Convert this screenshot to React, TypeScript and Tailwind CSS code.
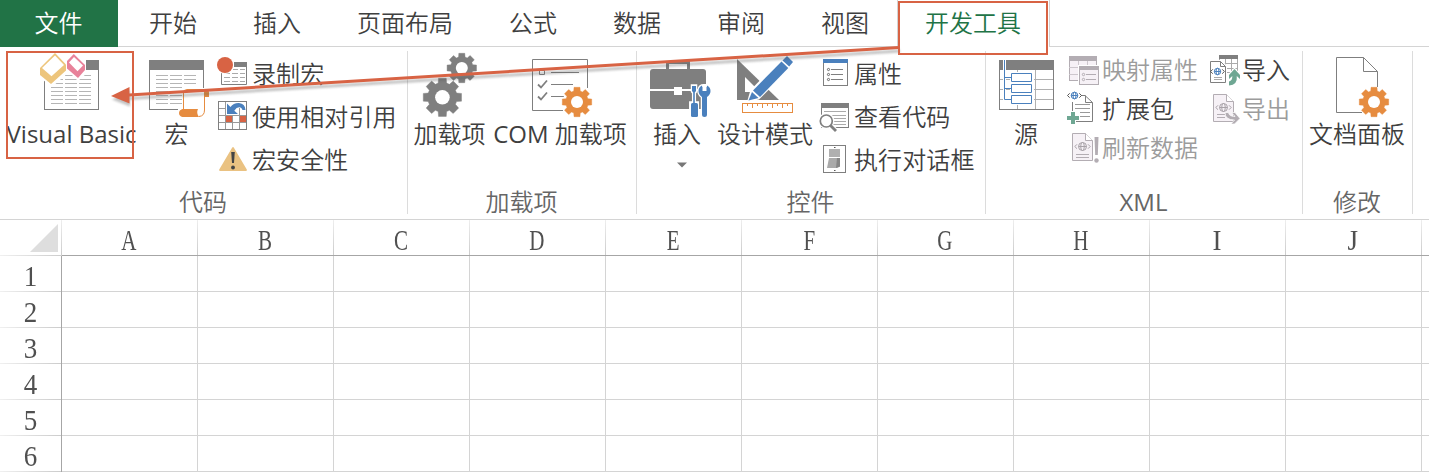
import type { ReactNode } from "react";

const GRAY = "#7f7f7f";
const BLUE = "#4a80bd";
const RED = "#d86344";
const ORANGE = "#e68c40";
const FADED = "#b3adb3";

/* ---------- drawing helpers ---------- */

function Gear({ cx, cy, r, hole, fill, halo }: { cx: number; cy: number; r: number; hole: number; fill: string; halo?: boolean }) {
  const inner = r * 0.76;
  const pts: string[] = [];
  for (let i = 0; i < 8; i++) {
    const a = (i * Math.PI) / 4 - Math.PI / 2;
    const steps: [number, number][] = [
      [-0.29, inner],
      [-0.2, r],
      [0.2, r],
      [0.29, inner],
    ];
    for (const [d, rad] of steps) pts.push(`${(cx + rad * Math.cos(a + d)).toFixed(2)},${(cy + rad * Math.sin(a + d)).toFixed(2)}`);
  }
  return (
    <g>
      {halo && <circle cx={cx} cy={cy} r={r * 0.95} fill="#fff" />}
      <polygon points={pts.join(" ")} fill={fill} stroke={fill} strokeWidth="0.4" strokeLinejoin="round" />
      <circle cx={cx} cy={cy} r={hole} fill="#fff" />
    </g>
  );
}

function Globe({ cx, cy, r, color, side = GRAY }: { cx: number; cy: number; r: number; color: string; side?: string }) {
  return (
    <g fill="none" stroke={color} strokeWidth="1">
      <circle cx={cx} cy={cy} r={r} />
      <ellipse cx={cx} cy={cy} rx={r * 0.45} ry={r} />
      <path d={`M${cx - r} ${cy}h${2 * r}`} />
      <path d={`M${cx - r - 1.5} ${cy - 2.2}l-2.2 2.2l2.2 2.2M${cx + r + 1.5} ${cy - 2.2}l2.2 2.2l-2.2 2.2`} stroke={side} />
    </g>
  );
}

function Lines({ segs, ys, color = "#b5b5b5" }: { segs: [number, number][]; ys: number[]; color?: string }) {
  return <path d={ys.map((y) => segs.map(([a, b]) => `M${a} ${y}H${b}`).join("")).join("")} stroke={color} strokeWidth="1" fill="none" />;
}

/* ---------- ribbon building blocks ---------- */

function Group({ title, width, children }: { title: ReactNode; width: string; children: ReactNode }) {
  return (
    <section className={`${width} flex h-[163px] shrink-0 flex-col border-r border-[#dcdcdc]`}>
      <div className="flex h-[140px]">{children}</div>
      <h2 className="pr-px text-center leading-6 text-[#666]">{title}</h2>
    </section>
  );
}

function BigButton({ label, x, w, width, children, menu, clip }: { label: ReactNode; x: number; w: number; width: string; children: ReactNode; menu?: boolean; clip?: boolean }) {
  return (
    <button className={`${width} flex shrink-0 flex-col items-center`}>
      <svg width={w} height={65} viewBox={`${x} 51 ${w} 65`} className="block shrink-0 overflow-visible">
        {children}
      </svg>
      {clip ? (
        <span className="flex h-[37px] w-[129px] items-center justify-center overflow-hidden pb-[2px] font-normal whitespace-nowrap">
          <span className="shrink-0">{label}</span>
        </span>
      ) : (
        <span className="flex h-[37px] items-center pr-px pb-[2px] whitespace-pre">{label}</span>
      )}
      {menu && (
        <svg width="10" height="6" viewBox="0 0 10 6" className="mt-[9px] ml-[8px] block">
          <path d="M0 0.5h10l-5 5z" fill="#777" />
        </svg>
      )}
    </button>
  );
}

function SmallButton({ label, x, y, w, h, children, disabled }: { label: string; x: number; y: number; w: number; h: number; children: ReactNode; disabled?: boolean }) {
  return (
    <button className={`flex items-center gap-[2px] whitespace-nowrap ${disabled ? "text-[#9c9c9c]" : ""}`}>
      <svg width={w} height={h} viewBox={`${x} ${y} ${w} ${h}`} className="block shrink-0 overflow-visible">
        {children}
      </svg>
      <span className={h === 43 ? "pl-px leading-none tracking-[0.1px]" : "pb-[2px] leading-none"}>{label}</span>
    </button>
  );
}

/* ---------- tabs ---------- */

const TABS = ["开始", "插入", "页面布局", "公式", "数据", "审阅", "视图"];

function Tabs() {
  return (
    <nav className="flex h-[47px] text-[24px] leading-6">
      <button className="flex w-[118px] items-center justify-center bg-[#217346] pr-px pb-[2px] text-white">文件</button>
      <div className="w-[3px] border-b border-[#d4d4d4]" />
      {TABS.map((t) => (
        <button key={t} className="border-b border-[#d4d4d4] px-7 pb-px whitespace-nowrap">
          {t}
        </button>
      ))}
      <button className="border-x border-[#d4d4d4] pr-[28px] pb-[2px] pl-[27px] whitespace-nowrap text-[#217346]">开发工具</button>
      <div className="flex-1 border-b border-[#d4d4d4]" />
    </nav>
  );
}

/* ---------- ribbon ---------- */

function Ribbon() {
  return (
    <div className="flex h-[173px] border-b border-[#d4d4d4] pt-1">
      <Group title="代码" width="w-[408px]">
        <BigButton label="Visual Basic" x={0} w={143} width="w-[143px]" clip>
          <rect x="44.5" y="60.5" width="54" height="49" fill="#fff" stroke={GRAY} />
          <rect x="44" y="60" width="55" height="10" fill={GRAY} />
          <Lines segs={[[51, 63], [65, 77], [79, 91]]} ys={[75.5, 79.5, 83.5, 87.5, 91.5, 95.5, 99.5, 103.5]} />
          <path d="M38 51H86V74L78 81L69 72L52 87L38 76Z" fill="#fff" />
          <path d="M55 53L66 64.5V70.5L51 84L40 75V68Z" fill="#edc57c" />
          <path d="M55 55.6L64 65L51.5 76.3L42 68Z" fill="#fff" />
          <path d="M73.8 54L85 65V70L78 78L67 68.5V61Z" fill="#e8829a" />
          <path d="M74 57L83 65.5L77.5 71.3L69 62.5Z" fill="#fff" />
        </BigButton>
        <BigButton label="宏" x={143} w={68} width="w-[68px]">
          <rect x="149.5" y="60.5" width="54" height="49" fill="#fff" stroke={GRAY} />
          <rect x="149" y="60" width="55" height="10" fill={GRAY} />
          <Lines segs={[[156, 168], [170, 182], [184, 196]]} ys={[75.5, 79.5, 83.5]} />
          <Lines segs={[[156, 168], [170, 182]]} ys={[87.5, 91.5, 95.5, 99.5, 103.5]} />
          <path d="M182 88H206V118H178V108H182Z" fill="#fff" />
          <path d="M183.5 109V93q0-3.500 3.500-3.500H206q-1.500 1-1.500 3.500V110q0 6-5.500 6.500" fill="#fff" stroke={ORANGE} />
          <path d="M204 97V93q0-4 2.500-4q2.500 0 2.500 4v4Z" fill={ORANGE} />
          <path d="M182.500 109H198q-2 4 1 8H182.500q-3.500-1-3.500-4t3.500-4Z" fill={ORANGE} />
        </BigButton>
        <div className="flex flex-col pt-px">
          <SmallButton label="录制宏" x={211} y={52} w={38} h={43}>
            <path d="M221.500 73V84.500H246.500V62" fill="none" stroke={GRAY} />
            <rect x="234" y="62" width="13" height="5" fill={GRAY} />
            <Lines segs={[[233, 238], [240, 245]]} ys={[69.5]} color="#aaa" />
            <Lines segs={[[224, 230], [232, 238], [240, 245]]} ys={[73.5, 77.5, 81.5]} color="#aaa" />
            <circle cx="225" cy="65" r="9" fill="#fff" />
            <circle cx="225" cy="65" r="8" fill={RED} />
          </SmallButton>
          <SmallButton label="使用相对引用" x={211} y={95} w={38} h={43}>
            <rect x="218.500" y="101.500" width="28" height="28" fill="#fff" stroke={GRAY} />
            <path d="M225.500 102V129M219 108.500H225M219 115.500H246M219 122.500H246M232.500 115V129M239.500 108V129" stroke="#999" fill="none" />
            <rect x="226" y="116" width="6" height="6" fill={RED} />
            <rect x="240" y="116" width="6" height="6" fill={RED} />
            <path d="M227 103.500V114H238L234.300 110.700Q237 106.500 240.500 107.500Q242 108 242.500 110H245.500Q245 103.500 239 103Q233.500 102.800 230.500 107Z" fill={BLUE} />
          </SmallButton>
          <SmallButton label="宏安全性" x={211} y={138} w={38} h={43}>
            <path d="M233 148L220 170H246Z" fill="#eac282" stroke="#eac282" strokeWidth="1.800" strokeLinejoin="round" />
            <path d="M231.200 152h3.600l-.8 11h-2Z" fill="#444" />
            <circle cx="233" cy="167.500" r="1.900" fill="#444" />
          </SmallButton>
        </div>
      </Group>

      <Group title="加载项" width="w-[229px]">
        <BigButton label="加载项" x={408} w={84} width="w-[84px]">
          <Gear cx={461.800} cy={68} r={15} hole={6} fill={GRAY} />
          <Gear cx={442.400} cy={97.300} r={19.500} hole={7.300} fill={GRAY} />
        </BigButton>
        <BigButton
          label={
            <>
              <span className="font-normal">COM </span>加载项
            </>
          }
          x={492}
          w={137}
          width="w-[137px]"
        >
          <path d="M563 110.500H532.500V59.500H587.500V88" fill="none" stroke={GRAY} />
          <path d="M539.500 70.500h5v4h-5ZM551 72.500h28M551 84.500h22M551 96.500h13" fill="none" stroke={GRAY} />
          <path d="M538 84.500l3 3l6-7M538 96.500l3 3l6-7" fill="none" stroke={GRAY} strokeWidth="1.800" />
          <Gear cx={577} cy={102} r={15} hole={6} fill={ORANGE} halo />
        </BigButton>
      </Group>

      <Group title="控件" width="w-[349px]">
        <BigButton label="插入" x={637} w={81} width="w-[81px]" menu>
          <path d="M667.500 69V62.500H688.500V69" fill="none" stroke={GRAY} strokeWidth="3" />
          <rect x="650" y="69" width="56" height="40" rx="3" fill={GRAY} />
          <path d="M650 90H706" stroke="#fff" strokeWidth="2" />
          <rect x="674" y="87" width="8" height="8" fill="#fff" />
          <path d="M692 85.500h4v6l-1.200 1.500v9.500h3v14h-7.500v-14h2.900V93L692 91.500Z" fill={BLUE} stroke="#fff" strokeWidth="2.500" />
          <path d="M701.500 85.500Q698.500 87 698.500 91Q698.500 94.500 702 97V114.500Q702 117 704.500 117T707 114.500V97Q710.500 94.500 710.500 91Q710.500 87 707 85.500Z" fill={BLUE} stroke="#fff" strokeWidth="2.500" />
          <rect x="691" y="103" width="7" height="14" rx="1.500" fill={BLUE} />
          <path d="M692 86h4v5l-1.200 1.500V103h-1.600V92.500L692 91Z" fill={BLUE} />
          <path d="M702 85.500V91h5V85.500Q710.500 87 710.500 91Q710.500 94.500 707 97V114.500Q707 117 704.500 117T702 114.500V97Q698.500 94.500 698.500 91Q698.500 87 702 85.500Z" fill={BLUE} />
          <path d="M702.500 84h4V91h-4Z" fill="#fff" />
        </BigButton>
        <BigButton label="设计模式" x={718} w={95} width="w-[95px]">
          <path d="M737 59L779 100H737Z" fill={GRAY} />
          <path d="M745 77L760 92H745Z" fill="#fff" />
          <path d="M750.500 90L785 55L794.500 64L759 99.500L747 102Z" fill="#fff" />
          <path d="M753 90.500L781.500 61.500L788.300 68L760 97Z" fill={BLUE} />
          <path d="M752 92L758.500 98L748.500 100.500Z" fill={BLUE} />
          <path d="M782.500 60.500L787 56L793 62L789.200 66.500Z" fill={BLUE} />
          <rect x="742.500" y="103.500" width="50" height="9" fill="#fff" stroke={ORANGE} />
          <path d="M747.500 104v2M752.500 104v4M757.500 104v2M762.500 104v4M767.500 104v2M772.500 104v4M777.500 104v2M782.500 104v4M787.500 104v2" stroke={ORANGE} />
        </BigButton>
        <div className="flex flex-col pt-px">
          <SmallButton label="属性" x={813} y={52} w={38} h={43}>
            <rect x="823.500" y="59.500" width="24" height="26" fill="#fff" stroke={GRAY} />
            <rect x="823" y="59" width="25" height="4" fill={BLUE} />
            <path d="M831 69.500h12M831 74.500h12M831 79.500h12" stroke={GRAY} />
            <g fill="none" stroke="#666">
              <circle cx="828.500" cy="69.500" r="1.100" />
              <circle cx="828.500" cy="74.500" r="1.100" />
              <circle cx="828.500" cy="79.500" r="1.100" />
            </g>
          </SmallButton>
          <SmallButton label="查看代码" x={813} y={95} w={38} h={43}>
            <rect x="821.500" y="103.500" width="27" height="24" fill="#fff" stroke={GRAY} />
            <rect x="821" y="103" width="28" height="5" fill={GRAY} />
            <Lines segs={[[824, 846]]} ys={[111.5, 115.5, 118.5, 121.5, 124.5]} color="#aaa" />
            <circle cx="826.300" cy="121" r="8" fill="#fff" />
            <path d="M830 125L836.500 131.500" stroke="#fff" strokeWidth="5" />
            <circle cx="826.300" cy="121" r="6" fill="#fff" stroke={GRAY} strokeWidth="1.700" />
            <path d="M830.500 125.500L836 131" stroke={GRAY} strokeWidth="2.800" />
          </SmallButton>
          <SmallButton label="执行对话框" x={813} y={138} w={38} h={43}>
            <rect x="823.500" y="145.500" width="22" height="27" fill="#fff" stroke={GRAY} />
            <path d="M829 149H840V157H829Z" fill="#b0b0b0" />
            <path d="M829 158H840V166.500L837 168H827Z" fill="#aaa" />
            <path d="M837 158H840V166.500L836 168Z" fill="#868686" />
            <path d="M834 147h1.500v1h-1.500ZM834 170h1.500v1h-1.500Z" fill="#555" />
          </SmallButton>
        </div>
      </Group>

      <Group title={<span className="font-normal">XML</span>} width="w-[317px]">
        <BigButton label="源" x={986} w={81} width="w-[81px]">
          <rect x="999.500" y="60.500" width="54" height="49" fill="#fff" stroke={GRAY} />
          <path d="M1000 79.500h53M1000 89.500h53M1000 99.500h53M1017.500 70v39M1035.500 70v39" stroke="#b0b0b0" fill="none" />
          <rect x="999" y="60" width="55" height="10" fill={GRAY} />
          <path d="M1004.500 60V99.500H1011" stroke="#fff" strokeWidth="3" fill="none" />
          <path d="M1010 72H1034V105H1010Z" fill="#fff" />
          <path d="M1004.500 60V99.500H1011M1004.500 77.500H1011M1004.500 88.500H1011" stroke={BLUE} fill="none" />
          <path d="M1011.500 73.500h20v8h-20ZM1011.500 84.500h20v8h-20ZM1011.500 95.500h20v8h-20Z" stroke={BLUE} fill="#fff" />
        </BigButton>
        <div className="flex w-[140px] shrink-0 flex-col">
          <SmallButton label="映射属性" x={1067} y={51} w={33} h={39} disabled>
            <rect x="1069.500" y="56.500" width="27" height="24" fill="#f6f1f6" stroke={FADED} />
            <path d="M1069 67.500h28M1069 74.500h28M1078.500 60v20M1087.500 60v20" stroke="#cdc7cd" />
            <rect x="1069" y="56" width="28" height="5" fill={FADED} />
            <path d="M1078 65H1100V86H1078Z" fill="#fff" />
            <rect x="1079.500" y="66.500" width="19" height="18" fill="#f6f1f6" stroke={FADED} />
            <rect x="1079" y="66" width="20" height="4" fill={FADED} />
            <g fill="none" stroke={FADED}>
              <circle cx="1083.500" cy="74.500" r="1.200" />
              <circle cx="1083.500" cy="79.500" r="1.200" />
              <path d="M1086 74.500h10M1086 79.500h10" />
            </g>
          </SmallButton>
          <SmallButton label="扩展包" x={1067} y={90} w={33} h={39}>
            <path d="M1072.500 102V121.500H1092.500V102.500L1085 95.500H1081" fill="#fff" stroke={GRAY} />
            <path d="M1085.500 95.500V102.500H1092.500" fill="none" stroke={GRAY} />
            <Lines segs={[[1075, 1090]]} ys={[104.5, 108.5]} color="#999" />
            <Lines segs={[[1080, 1090]]} ys={[112.5, 116.5]} color="#999" />
            <Globe cx={1074.500} cy={95.500} r={3.300} color={BLUE} side="#555" />
            <path d="M1073 111v14M1066 118h14" stroke="#fff" strokeWidth="6" />
            <path d="M1073 112v12M1067 118h12" stroke="#6fa793" strokeWidth="4" />
          </SmallButton>
          <SmallButton label="刷新数据" x={1067} y={129} w={33} h={39} disabled>
            <path d="M1072.500 133.500H1085.500L1092.500 140.500V160.500H1072.500Z" fill="#f6f1f6" stroke={FADED} />
            <path d="M1085.500 133.500V140.500H1092.500" fill="#fff" stroke={FADED} />
            <Globe cx={1082.500} cy={146.500} r={4} color="#a8a2a8" side="#a8a2a8" />
            <Lines segs={[[1076, 1089]]} ys={[154.5, 157.5]} color={FADED} />
            <path d="M1094.500 137h4l-.7 18h-2.600Z" fill={FADED} />
            <circle cx="1096.500" cy="160.500" r="2.200" fill={FADED} />
          </SmallButton>
        </div>
        <div className="flex flex-col">
          <SmallButton label="导入" x={1207} y={51} w={33} h={39}>
            <path d="M1219.500 56V72.500H1237.500V56M1219 63.500h18M1219 68.500h18M1225.500 59v13M1231.500 59v13" fill="none" stroke="#aaa" />
            <rect x="1219" y="55" width="19" height="4" fill={GRAY} />
            <path d="M1209 60H1222L1227 66V84H1209Z" fill="#fff" />
            <path d="M1210.500 61.500H1220.500L1225.500 66.500V82.500H1210.500Z" fill="#fff" stroke={GRAY} />
            <path d="M1220.500 61.500V66.500H1225.500" fill="none" stroke={GRAY} />
            <Globe cx={1217.500} cy={71.500} r={3.200} color={BLUE} side="#555" />
            <Lines segs={[[1214, 1222]]} ys={[77.5, 79.5]} color="#aaa" />
            <path d="M1234.500 69L1240 75V78.500L1236.500 75.500Q1237.500 84.500 1229 85V81.500Q1232.500 80.500 1232.500 75.500L1229 78.500V75Z" fill="#fff" stroke="#fff" strokeWidth="2" />
            <path d="M1234.500 69L1240 75V79L1236.800 76Q1237.800 85 1229 85.500V81.500Q1232.500 80.500 1232.300 76L1229 79V75Z" fill="#6fa793" />
          </SmallButton>
          <SmallButton label="导出" x={1207} y={90} w={33} h={39} disabled>
            <path d="M1213.500 94.500H1226.500L1233.500 101.500V121.500H1213.500Z" fill="#f6f1f6" stroke={FADED} />
            <path d="M1226.500 94.500V101.500H1233.500" fill="#fff" stroke={FADED} />
            <Globe cx={1223.500} cy={107.500} r={4} color="#a8a2a8" side="#a8a2a8" />
            <Lines segs={[[1217, 1225]]} ys={[114.5, 117.5]} color={FADED} />
            <path d="M1225 112.500H1228.500Q1229 116.500 1235 116.500L1231.500 112.500H1235L1240 118.500L1234.500 124H1231L1234.500 120Q1225 120 1225 112.500Z" fill={FADED} stroke="#fff" strokeWidth="0.700" />
          </SmallButton>
        </div>
      </Group>

      <Group title="修改" width="w-[110px]">
        <BigButton label="文档面板" x={1303} w={109} width="w-[109px]">
          <path d="M1362 112.500H1336.500V57.500H1363.500L1377.500 71.500V87" fill="none" stroke={GRAY} />
          <path d="M1363.500 57.500V71.500H1377.500" fill="none" stroke={GRAY} />
          <Gear cx={1374} cy={102} r={15} hole={6} fill={ORANGE} halo />
        </BigButton>
      </Group>
    </div>
  );
}

/* ---------- worksheet ---------- */

const COLUMNS = ["A", "B", "C", "D", "E", "F", "G", "H", "I", "J"];
const ROWS = ["1", "2", "3", "4", "5", "6"];

function Sheet() {
  return (
    <div className="font-['Liberation_Serif',serif] text-[30px] leading-[36px] text-[#505050]">
      <div className="flex h-9">
        <div className="flex w-[62px] shrink-0 flex-col">
          <div className="flex flex-1">
            <svg width="61" height="35" viewBox="0 0 61 35" className="block">
              <path d="M58 4V32H30Z" fill="#dedede" />
            </svg>
            <div className="w-px bg-gradient-to-b from-[#eeeeee] to-[#cccccc]" />
          </div>
          <div className="h-px bg-gradient-to-r from-[#f0f0f0] to-[#cccccc]" />
        </div>
        {COLUMNS.map((c) => (
          <div key={c} className="flex w-[136px] shrink-0 border-b border-[#a6a6a6]">
            <div className="flex flex-1 justify-center pt-[2px] pr-px">
              <span className={c === "I" || c === "J" ? "block scale-x-90" : "block scale-x-[0.7]"}>{c}</span>
            </div>
            <div className="w-px bg-gradient-to-b from-[#eeeeee] to-[#cccccc]" />
          </div>
        ))}
        <div className="flex-1 border-b border-[#a6a6a6]" />
      </div>
      {ROWS.map((r) => (
        <div key={r} className="flex h-9">
          <div className="flex w-[62px] shrink-0">
            <div className="flex flex-1 flex-col">
              <div className="flex h-[35px] justify-center pt-[2px]">
                <span className="block scale-x-[0.9]">{r}</span>
              </div>
              <div className="h-px bg-gradient-to-r from-[#f0f0f0] to-[#cccccc]" />
            </div>
            <div className="w-px bg-[#a6a6a6]" />
          </div>
          {COLUMNS.map((c) => (
            <div key={c} className="w-[136px] shrink-0 border-r border-b border-[#d4d4d4]" />
          ))}
          <div className="flex-1 border-b border-[#d4d4d4]" />
        </div>
      ))}
    </div>
  );
}

/* ---------- callout from the tab to the button ---------- */

function Callout() {
  return (
    <svg width="1429" height="472" viewBox="0 0 1429 472" className="pointer-events-none absolute top-0 left-0">
      <defs>
        <filter id="soft" x="-5%" y="-30%" width="110%" height="160%">
          <feGaussianBlur stdDeviation="1.2" />
        </filter>
      </defs>
      <g opacity="0.35" transform="translate(0 3)" filter="url(#soft)">
        <path d="M900 48L129 95.500" stroke="#555" strokeWidth="3" />
        <path d="M112 96.500L130 87.500V103.500Z" fill="#555" />
      </g>
      <path d="M899 47.500L129 95" stroke={RED} strokeWidth="3" />
      <path d="M111 96L129.500 87V103.500Z" fill={RED} />
      <rect x="7" y="52" width="126" height="106" fill="none" stroke={RED} strokeWidth="2" />
      <rect x="899" y="2" width="148" height="52" fill="none" stroke={RED} strokeWidth="2" />
    </svg>
  );
}

export default function App() {
  return (
    <div className="relative h-[472px] w-[1429px] overflow-hidden bg-white font-['Open_Sans','Noto_Sans_CJK_SC',sans-serif] text-[24px] font-[350] text-[#3f3f3f]">
      <Tabs />
      <Ribbon />
      <Sheet />
      <Callout />
    </div>
  );
}
